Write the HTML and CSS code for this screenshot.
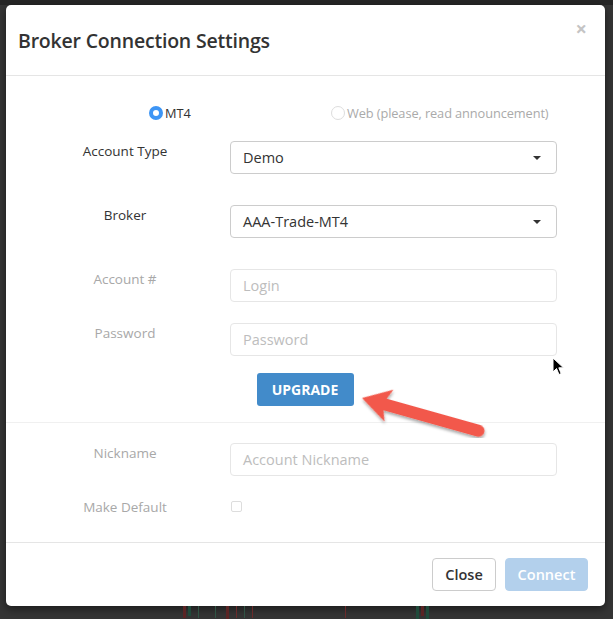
FILE: index.html
```html
<!DOCTYPE html>
<html lang="en">
  <head>
    <meta charset="UTF-8" />
    <meta name="viewport" content="width=device-width, initial-scale=1.0" />
    <title>Broker Connection Settings</title>
    <link rel="stylesheet" href="styles.css">
  </head>
  <body>
    <div class="topbar"></div>
    <div class="modal">
      <div class="modal-header">
        <h4 class="modal-title">Broker Connection Settings</h4>
        <span class="close">&times;</span>
      </div>

      <div class="modal-body">
        <div class="radios">
          <label class="radio"><span class="dot checked"></span>MT4</label>
          <label class="radio muted"><span class="dot"></span>Web (please, read announcement)</label>
        </div>

        <div class="row gap-lg">
          <label class="lbl">Account Type</label>
          <div class="select">Demo<span class="caret"></span></div>
        </div>

        <div class="row gap-lg">
          <label class="lbl">Broker</label>
          <div class="select">AAA-Trade-MT4<span class="caret"></span></div>
        </div>

        <div class="row gap-md">
          <label class="lbl muted">Account #</label>
          <div class="input">Login</div>
        </div>

        <div class="row gap-sm">
          <label class="lbl muted">Password</label>
          <div class="input">Password</div>
        </div>

        <div class="upgrade-wrap">
          <button type="button" class="btn-upgrade">UPGRADE</button>
        </div>
      </div>

      <div class="modal-body second">
        <div class="row gap-md">
          <label class="lbl muted">Nickname</label>
          <div class="input">Account Nickname</div>
        </div>
        <div class="row">
          <label class="lbl muted">Make Default</label>
          <span class="checkbox"></span>
        </div>
      </div>

      <div class="modal-footer">
        <button type="button" class="btn btn-close">Close</button>
        <button type="button" class="btn btn-connect">Connect</button>
      </div>
    </div>

    <div class="chart">
      <span class="candle red" style="margin-left: 183px; height: 12px"></span>
      <span class="candle green" style="height: 10px"></span>
      <span class="wick"></span>
      <span class="wick" style="margin-left: 14px"></span>
      <span class="candle red" style="margin-left: 8px; height: 14px"></span>
      <span class="wick red-w"></span>
      <span class="wick"></span>
      <span class="wick red-w"></span>
      <span class="wick red-w" style="margin-left: 90px"></span>
      <span class="candle green" style="margin-left: 68px; height: 14px"></span>
      <span class="candle red" style="height: 10px"></span>
      <span class="candle green" style="height: 14px"></span>
    </div>

    <!-- red pointer arrow drawn over the modal -->
    <svg class="pointer" width="140" height="60" viewBox="0 0 140 60">
      <defs>
        <filter id="sh" x="-20%" y="-40%" width="140%" height="180%">
          <feDropShadow dx="1" dy="2" stdDeviation="1.5" flood-color="#000" flood-opacity="0.35" />
        </filter>
      </defs>
      <g transform="translate(4 20) rotate(15.7)" filter="url(#sh)">
        <path d="M0 0 L28 -16.5 L24 -6 L121 -6 A6 6 0 0 1 121 6 L24 6 L28 16.5 Z" fill="#f2594b" />
      </g>
    </svg>

    <svg class="cursor" width="14" height="20" viewBox="0 0 14 20">
      <path d="M1 1 L1 15 L4.5 11.5 L7 17.5 L9.2 16.6 L6.8 10.8 L11.5 10.8 Z" fill="#000" stroke="#fff" stroke-width="1" />
    </svg>
  </body>
</html>
```

FILE: styles.css
```css
* {
  margin: 0;
  padding: 0;
  box-sizing: border-box;
}

body {
  width: 613px;
  height: 619px;
  overflow: hidden;
  background-color: #353535;
  font-family: "Open Sans", "Liberation Sans", sans-serif;
  font-size: 13.5px;
  color: #333;
  position: relative;
}

.topbar {
  height: 5px;
  background-color: #262626;
}

.modal {
  width: 599px;
  margin-left: 6px;
  background-color: #fff;
  border-radius: 5px;
  box-shadow: 0 3px 9px rgba(0, 0, 0, 0.5);
  display: flex;
  flex-direction: column;
}

.modal-header {
  height: 71px;
  padding: 0 12px;
  display: flex;
  justify-content: space-between;
  align-items: center;
  border-bottom: 1px solid #e5e5e5;
}

.modal-title {
  font-size: 19.5px;
  font-weight: 600;
  color: #333;
  letter-spacing: -0.2px;
  margin-top: 1px;
}

.close {
  align-self: flex-start;
  margin-top: 14px;
  margin-right: 6px;
  font-size: 20px;
  font-weight: 700;
  color: #c4c4c4;
  line-height: 1;
}

.modal-body {
  padding: 27px 14px 16px;
  border-bottom: 1px solid #f0f0f0;
}

.modal-body.second {
  padding: 20px 14px 25px;
  border-bottom: 1px solid #e5e5e5;
}

.radios {
  display: grid;
  grid-template-columns: 182px auto;
  padding-left: 129px;
  height: 20px;
  margin-bottom: 18px;
  align-items: center;
}

.radio {
  display: flex;
  align-items: center;
  font-size: 12.8px;
  color: #333;
}

.radio.muted {
  color: #aaa;
  letter-spacing: -0.1px;
}

.dot {
  width: 14px;
  height: 14px;
  border-radius: 50%;
  border: 1px solid #ddd;
  margin-right: 2px;
  background-color: #fff;
}

.dot.checked {
  border: 4.5px solid #3d95f5;
  background-color: #fff;
}

.row {
  display: grid;
  grid-template-columns: 210px 327px;
  align-items: start;
}

.gap-lg {
  margin-bottom: 31px;
}

.gap-md {
  margin-bottom: 21px;
}

.gap-sm {
  margin-bottom: 17px;
}

.lbl {
  text-align: center;
  line-height: 20px;
  color: #333;
}

.lbl.muted {
  color: #a8a8a8;
}

.select,
.input {
  height: 33px;
  border-radius: 4px;
  padding: 0 12px;
  display: flex;
  align-items: center;
  font-size: 14.5px;
}

.select {
  border: 1px solid #ccc;
  color: #333;
  font-weight: 500;
  justify-content: space-between;
}

.caret {
  width: 0;
  height: 0;
  border-left: 4px solid transparent;
  border-right: 4px solid transparent;
  border-top: 4px solid #333;
  margin-right: 3px;
}

.input {
  border: 1px solid #e6e6e6;
  color: #bdbdbd;
}

.checkbox {
  width: 11px;
  height: 11px;
  margin-top: 4px;
  margin-left: 1px;
  border: 1px solid #ddd;
  border-radius: 2px;
}

.upgrade-wrap {
  display: flex;
  justify-content: center;
  padding-right: 1px;
}

.btn-upgrade {
  width: 97px;
  height: 33px;
  background-color: #428bca;
  color: #fff;
  border: none;
  border-radius: 3px;
  font-family: inherit;
  font-size: 14px;
  font-weight: 700;
}

.modal-footer {
  padding: 15px 17px 15px;
  display: flex;
  justify-content: flex-end;
  gap: 9px;
}

.btn {
  height: 33px;
  border-radius: 4px;
  font-family: inherit;
  font-size: 14.5px;
  font-weight: 600;
}

.btn-close {
  width: 64px;
  background-color: #fff;
  border: 1px solid #ccc;
  color: #333;
}

.btn-connect {
  width: 83px;
  background-color: #b3d0ec;
  border: 1px solid #b3d0ec;
  color: #fff;
}

.chart {
  height: 13px;
  display: flex;
  align-items: flex-start;
  gap: 2px;
}

.candle {
  width: 3px;
}

.candle.red {
  background-color: #5a2424;
}

.candle.green {
  background-color: #1f4a3a;
}

.wick {
  width: 1px;
  height: 12px;
  margin-left: 5px;
  background-color: #2f5444;
}

.wick.red-w {
  background-color: #6a2a2a;
}

.pointer {
  position: absolute;
  left: 358px;
  top: 378px;
}

.cursor {
  position: absolute;
  left: 552px;
  top: 357px;
}
```
